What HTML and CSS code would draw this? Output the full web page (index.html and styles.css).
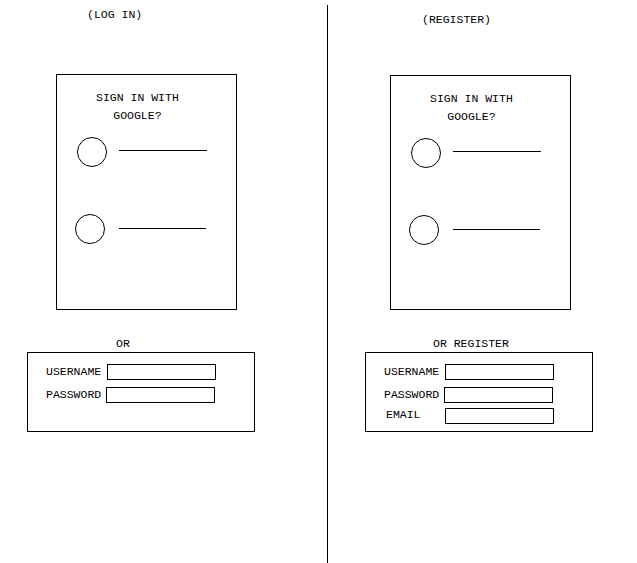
FILE: index.html
```html
<!DOCTYPE html>
<html lang="en">
<head>
    <meta charset="UTF-8">
    <meta name="viewport" content="width=device-width, initial-scale=1.0">
    <title>Log In / Register</title>
    <link rel="stylesheet" href="styles.css">
</head>
<body>
    <div class="page">
        <!-- lado esquerdo: login -->
        <div class="side side-login">
            <div class="title">(LOG IN)</div>

            <div class="google-card">
                <div class="google-text">SIGN IN WITH<br>GOOGLE?</div>
                <div class="account-row">
                    <div class="avatar"></div>
                    <div class="account-line"></div>
                </div>
                <div class="account-row second">
                    <div class="avatar"></div>
                    <div class="account-line"></div>
                </div>
            </div>

            <div class="or-text">OR</div>
            <form class="form-box" action="/login" method="POST">
                <label for="login-user">USERNAME</label>
                <input type="text" id="login-user" name="username">
                <label for="login-pass">PASSWORD</label>
                <input type="password" id="login-pass" name="password" class="shift">
            </form>
        </div>

        <!-- lado direito: cadastro -->
        <div class="side side-register">
            <div class="title">(REGISTER)</div>

            <div class="google-card">
                <div class="google-text">SIGN IN WITH<br>GOOGLE?</div>
                <div class="account-row">
                    <div class="avatar"></div>
                    <div class="account-line"></div>
                </div>
                <div class="account-row second">
                    <div class="avatar"></div>
                    <div class="account-line"></div>
                </div>
            </div>

            <div class="or-text">OR REGISTER</div>
            <form class="form-box" action="/register" method="POST">
                <label for="reg-user">USERNAME</label>
                <input type="text" id="reg-user" name="username">
                <label for="reg-pass">PASSWORD</label>
                <input type="password" id="reg-pass" name="password" class="shift">
                <label for="reg-email" class="email-label">EMAIL</label>
                <input type="email" id="reg-email" name="email" class="email-input">
            </form>
        </div>
    </div>
</body>
</html>
```

FILE: styles.css
```css
body {
    margin: 0;
    background-color: #fff;
    color: #000;
    font-family: "Liberation Mono", "Courier New", monospace;
    font-size: 11.5px;
    line-height: 18px;
}
.page {
    display: flex;
    height: 563px;
    padding-top: 5px;
    box-sizing: border-box;
}
.side-login {
    width: 327px;
}
.side-register {
    flex: 1;
    border-left: 1px solid #000;
}
.title {
    height: 18px;
    padding-top: 1px;
    margin-left: 87px;
}
.side-register .title {
    margin-top: 6px;
    padding-top: 0;
    margin-left: 94px;
}
.google-card {
    width: 181px;
    height: 236px;
    box-sizing: border-box;
    margin: 50px 0 0 56px;
    padding-top: 14px;
    border: 1px solid #000;
}
.side-register .google-card {
    height: 235px;
    margin: 46px 0 0 62px;
}
.google-text {
    display: inline-block;
    margin-left: 39px;
    text-align: center;
}
.account-row {
    display: flex;
    align-items: flex-start;
    margin-top: 12px;
    margin-left: 20px;
}
.account-row.second {
    margin-top: 47px;
    margin-left: 18px;
}
.avatar {
    width: 30px;
    height: 30px;
    box-sizing: border-box;
    border: 1px solid #000;
    border-radius: 50%;
}
.account-line {
    width: 88px;
    margin: 13px 0 0 12px;
    border-top: 1px solid #000;
}
.account-row.second .account-line {
    width: 87px;
    margin: 14px 0 0 14px;
}
.or-text {
    height: 18px;
    box-sizing: border-box;
    margin: 24px 0 0 116px;
    padding-top: 1px;
}
.side-register .or-text {
    margin: 24px 0 0 105px;
}
.form-box {
    display: grid;
    grid-template-columns: 61px 109px;
    align-items: center;
    align-content: start;
    row-gap: 7px;
    width: 228px;
    height: 80px;
    box-sizing: border-box;
    margin: 0 0 0 27px;
    padding: 11px 0 0 18px;
    border: 1px solid #000;
}
.side-register .form-box {
    margin-left: 37px;
}
label {
    line-height: 16px;
}
input {
    width: 109px;
    height: 16px;
    box-sizing: border-box;
    margin: 0;
    padding: 0 2px;
    border: 1px solid #000;
    border-radius: 0;
    font-family: inherit;
    font-size: 11.5px;
}
input.shift {
    margin-left: -1px;
}
.email-label {
    margin: -4px 0 0 2px;
}
.email-input {
    margin-top: -2px;
}
```
